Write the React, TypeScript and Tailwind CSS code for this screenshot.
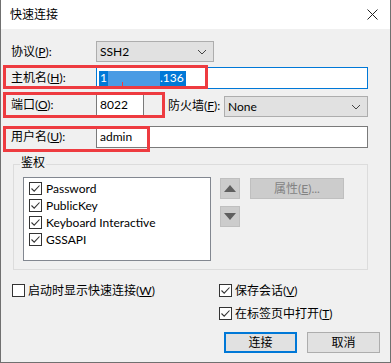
import React from 'react';

const font = { fontFamily: 'Lato, "Noto Sans CJK SC", sans-serif' };

function Mn({ k }: { k: string }) {
  return (
    <span>
      (<span className="underline underline-offset-[1px]">{k}</span>)
    </span>
  );
}

function Check({ checked }: { checked: boolean }) {
  return (
    <span className="flex h-[13px] w-[13px] shrink-0 items-center justify-center border border-[#333] bg-white">
      {checked && (
        <svg width="11" height="11" viewBox="0 0 11 11">
          <polyline points="1.5,5.5 4.2,8.2 9.5,2.5" fill="none" stroke="#333" strokeWidth="1.1" />
        </svg>
      )}
    </span>
  );
}

function Chevron() {
  return (
    <svg width="10" height="6" viewBox="0 0 10 6">
      <polyline points="1,1 5,5 9,1" fill="none" stroke="#444" strokeWidth="1" />
    </svg>
  );
}

function Select({ value, w, mt = 0 }: { value: string; w: string; mt?: number }) {
  return (
    <div
      className={`flex h-[21px] ${w} items-center justify-between border border-[#adadad] bg-[#e1e1e1] pl-[3px] pr-[6px]`}
      style={{ marginTop: mt }}
    >
      <span>{value}</span>
      <Chevron />
    </div>
  );
}

export default function App() {
  const authItems = ['Password', 'PublicKey', 'Keyboard Interactive', 'GSSAPI'];

  return (
    <div
      className="relative h-[363px] w-[391px] overflow-hidden border-b border-l border-r border-[#707070] bg-[#f0f0f0] text-[12px] leading-none text-black"
      style={font}
    >
      {/* title bar */}
      <div className="flex h-[29px] items-center justify-between bg-white pl-[9px] pr-[12px]">
        <span className="text-[12px]">快速连接</span>
        <svg width="11" height="11" viewBox="0 0 11 11">
          <path d="M0.5 0.5 L10.5 10.5 M10.5 0.5 L0.5 10.5" stroke="#222" strokeWidth="1" />
        </svg>
      </div>

      <div className="pl-[10px] pt-[12px]">
        {/* protocol */}
        <div className="flex h-[21px] items-center">
          <span className="w-[85px]">
            协议<Mn k="P" />:
          </span>
          <Select value="SSH2" w="w-[118px]" />
        </div>

        {/* host */}
        <div className="mt-[5px] flex h-[22px] items-center">
          <span className="w-[85px]">
            主机名<Mn k="H" />:
          </span>
          <div className="flex h-[22px] w-[272px] items-center border border-[#0078d7] bg-white pl-[2px]">
            <span className="flex h-[15px] items-center text-white">
              <span className="flex h-full items-center bg-[#0078d7] pl-[1px] pr-[1px]">1</span>
              <span className="h-full w-[52px] bg-[#4a9be4]" />
              <span className="flex h-full items-center bg-[#0078d7] pr-[2px]">.136</span>
            </span>
          </div>
        </div>

        {/* port + firewall */}
        <div className="mt-[5px] flex items-start">
          <span className="flex h-[22px] w-[85px] items-center">
            端口<Mn k="O" />:
          </span>
          <div className="flex h-[22px] w-[48px] items-center border border-[#7a7a7a] bg-white pl-[3px]">8022</div>
          <span className="ml-[24px] flex h-[22px] w-[56px] items-center pt-[2px]">
            防火墙<Mn k="F" />:
          </span>
          <Select value="None" w="w-[144px]" mt={2} />
        </div>

        {/* username */}
        <div className="mt-[9px] flex h-[22px] items-center">
          <span className="w-[85px]">
            用户名<Mn k="U" />:
          </span>
          <div className="flex h-[22px] w-[272px] items-center border border-[#7a7a7a] bg-white pl-[3px]">admin</div>
        </div>

        {/* auth group */}
        <div className="relative ml-[2px] mt-[16px] h-[106px] w-[355px] border border-[#dcdcdc]">
          <span className="absolute left-[6px] top-[-8px] bg-[#f0f0f0] px-[1px] text-[12px]">鉴权</span>
          <div className="flex pl-[9px] pt-[12px]">
            <div className="h-[84px] w-[188px] border border-[#828790] bg-white pl-[5px] pt-[2px]">
              {authItems.map((t) => (
                <div key={t} className="flex h-[17px] items-center gap-[4px]">
                  <Check checked />
                  <span>{t}</span>
                </div>
              ))}
            </div>
            <div className="ml-[9px] flex flex-col gap-[7px] pt-[1px]">
              <div className="flex h-[21px] w-[20px] items-center justify-center border border-[#bfbfbf] bg-[#cccccc]">
                <svg width="12" height="7" viewBox="0 0 12 7">
                  <polygon points="0,7 12,7 6,0" fill="#5f5f5f" />
                </svg>
              </div>
              <div className="flex h-[21px] w-[20px] items-center justify-center border border-[#bfbfbf] bg-[#cccccc]">
                <svg width="12" height="7" viewBox="0 0 12 7">
                  <polygon points="0,0 12,0 6,7" fill="#5f5f5f" />
                </svg>
              </div>
            </div>
            <div className="ml-[10px] mt-[1px] flex h-[21px] w-[94px] items-center justify-center border border-[#bfbfbf] bg-[#cccccc] text-[#838383]">
              属性<Mn k="E" />...
            </div>
          </div>
        </div>

        {/* bottom */}
        <div className="mt-[14px] flex">
          <div className="flex h-[13px] w-[208px] items-center gap-[3px] pl-[1px]">
            <Check checked={false} />
            <span>
              启动时显示快速连接<Mn k="W" />
            </span>
          </div>
          <div className="flex flex-col">
            <div className="flex h-[13px] items-center gap-[3px]">
              <Check checked />
              <span>
                保存会话<Mn k="V" />
              </span>
            </div>
            <div className="mt-[10px] flex h-[13px] items-center gap-[3px]">
              <Check checked />
              <span>
                在标签页中打开<Mn k="T" />
              </span>
            </div>
            <div className="mt-[12px] ml-[5px] flex gap-[10px]">
              <div className="flex h-[21px] w-[73px] items-center justify-center border-2 border-[#0078d7] bg-[#e1e1e1]">连接</div>
              <div className="flex h-[21px] w-[73px] items-center justify-center border border-[#adadad] bg-[#e1e1e1]">取消</div>
            </div>
          </div>
        </div>
      </div>

      {/* red highlight boxes */}
      <div className="pointer-events-none absolute left-[2px] top-[65px] h-[24px] w-[205px] border-[3px] border-[#ee3b40]" />
      <div className="pointer-events-none absolute left-[121px] top-[82px] h-[6px] w-[1px] bg-[#ee3b40]" />
      <div className="pointer-events-none absolute left-[2px] top-[92px] h-[26px] w-[162px] border-[3px] border-[#ee3b40]" />
      <div className="pointer-events-none absolute left-[2px] top-[126px] h-[26px] w-[147px] border-[3px] border-[#ee3b40]" />
    </div>
  );
}
